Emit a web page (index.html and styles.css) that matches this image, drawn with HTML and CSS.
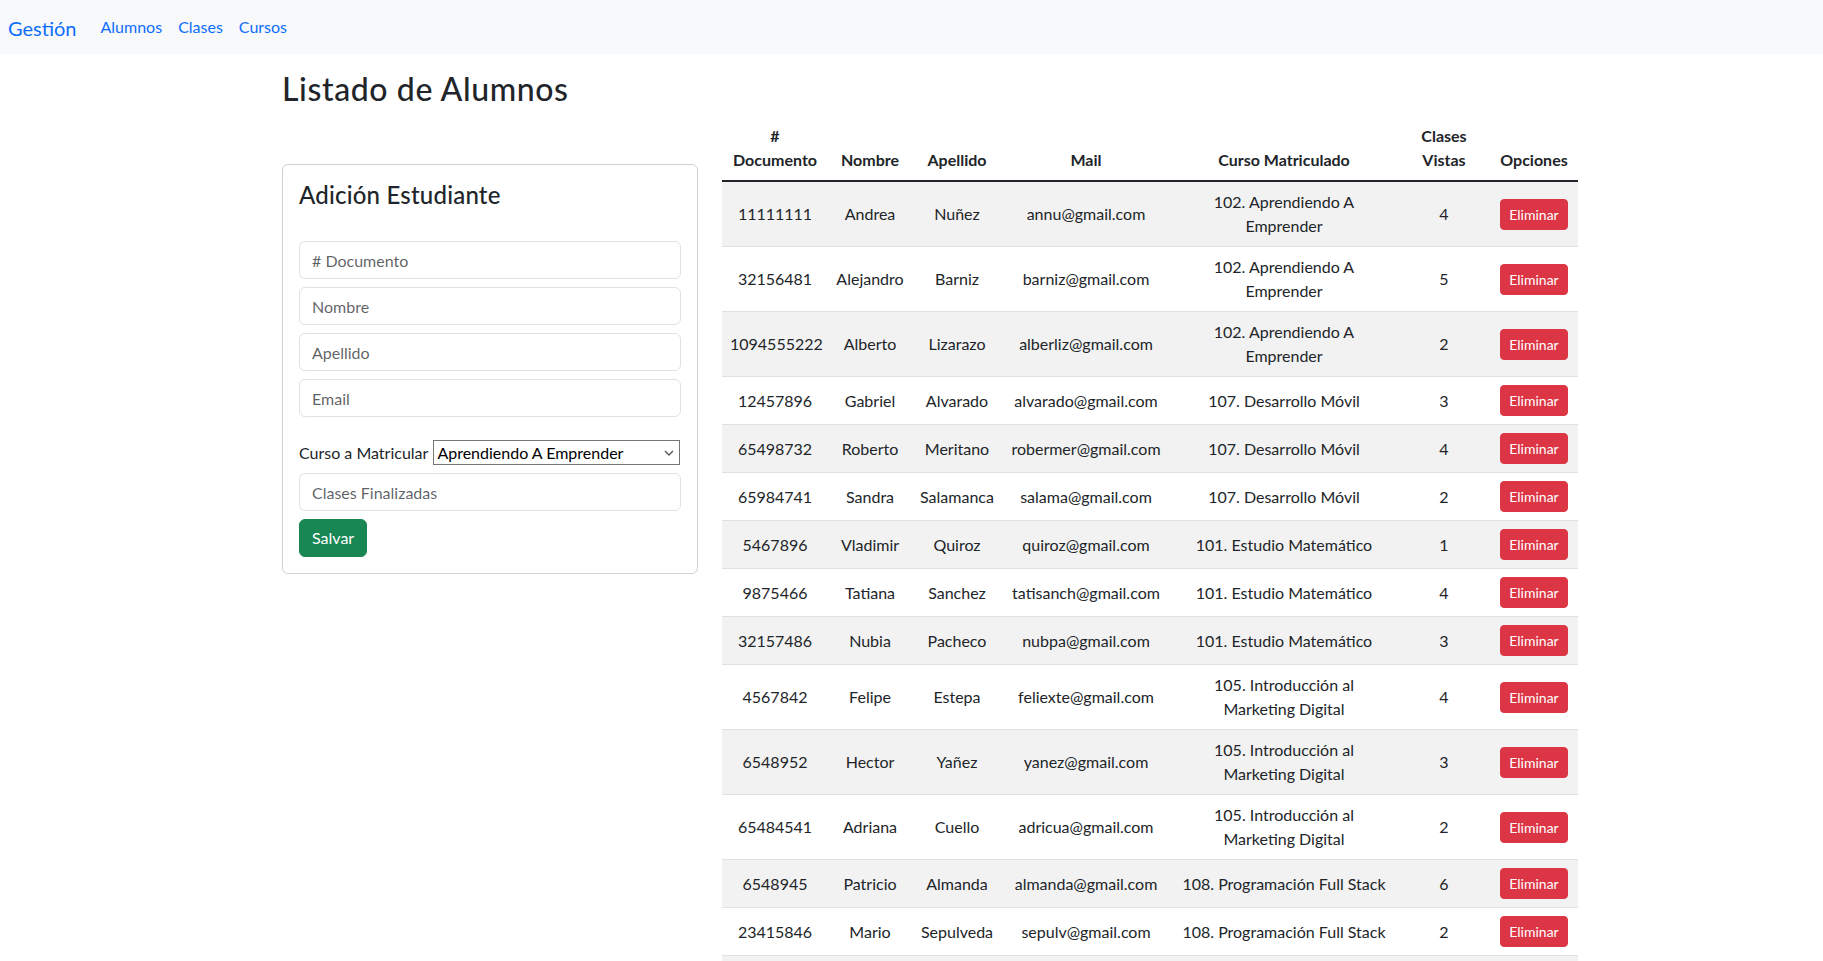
FILE: index.html
```html
<!DOCTYPE html>
<html lang="es">
<head>
<meta charset="utf-8">
<title>Gestión - Alumnos</title>
<link rel="stylesheet" href="styles.css">
</head>
<body>
<nav class="navbar">
  <a class="brand" href="#">Gestión</a>
  <ul class="nav-links">
    <li><a class="nav-link" href="#">Alumnos</a></li>
    <li><a class="nav-link" href="#">Clases</a></li>
    <li><a class="nav-link" href="#">Cursos</a></li>
  </ul>
</nav>

<main class="page">
  <h2 class="page-title">Listado de Alumnos</h2>
  <div class="layout">
    <section class="card">
      <h4 class="card-title">Adición Estudiante</h4>
      <form class="form">
        <input class="input" type="text" placeholder="# Documento">
        <input class="input" type="text" placeholder="Nombre">
        <input class="input" type="text" placeholder="Apellido">
        <input class="input" type="email" placeholder="Email">
        <div class="course-row">
          <label class="course-label" for="curso">Curso a Matricular</label>
          <span class="select-wrap">
            <select class="select" id="curso">
              <option>Aprendiendo A Emprender</option>
              <option>Estudio Matemático</option>
              <option>Introducción al Marketing Digital</option>
              <option>Desarrollo Móvil</option>
              <option>Programación Full Stack</option>
            </select>
            <svg class="select-arrow" width="10" height="6" viewBox="0 0 10 6" aria-hidden="true"><path d="M1 1l4 4 4-4" fill="none" stroke="#555" stroke-width="1.3"/></svg>
          </span>
        </div>
        <input class="input" type="text" placeholder="Clases Finalizadas">
        <div><button class="btn-save" type="button">Salvar</button></div>
      </form>
    </section>

    <div class="table-wrap">
      <table class="students">
        <colgroup>
          <col class="c-doc"><col class="c-nom"><col class="c-ape"><col class="c-mail"><col class="c-curso"><col class="c-clases"><col class="c-opc">
        </colgroup>
        <thead>
          <tr>
            <th># Documento</th>
            <th>Nombre</th>
            <th>Apellido</th>
            <th>Mail</th>
            <th>Curso Matriculado</th>
            <th>Clases Vistas</th>
            <th>Opciones</th>
          </tr>
        </thead>
        <tbody>
          <tr><td>11111111</td><td>Andrea</td><td>Nuñez</td><td>annu@gmail.com</td><td>102. Aprendiendo A Emprender</td><td>4</td><td><button class="btn-delete" type="button">Eliminar</button></td></tr>
          <tr><td>32156481</td><td>Alejandro</td><td>Barniz</td><td>barniz@gmail.com</td><td>102. Aprendiendo A Emprender</td><td>5</td><td><button class="btn-delete" type="button">Eliminar</button></td></tr>
          <tr><td>1094555222</td><td>Alberto</td><td>Lizarazo</td><td>alberliz@gmail.com</td><td>102. Aprendiendo A Emprender</td><td>2</td><td><button class="btn-delete" type="button">Eliminar</button></td></tr>
          <tr><td>12457896</td><td>Gabriel</td><td>Alvarado</td><td>alvarado@gmail.com</td><td>107. Desarrollo Móvil</td><td>3</td><td><button class="btn-delete" type="button">Eliminar</button></td></tr>
          <tr><td>65498732</td><td>Roberto</td><td>Meritano</td><td>robermer@gmail.com</td><td>107. Desarrollo Móvil</td><td>4</td><td><button class="btn-delete" type="button">Eliminar</button></td></tr>
          <tr><td>65984741</td><td>Sandra</td><td>Salamanca</td><td>salama@gmail.com</td><td>107. Desarrollo Móvil</td><td>2</td><td><button class="btn-delete" type="button">Eliminar</button></td></tr>
          <tr><td>5467896</td><td>Vladimir</td><td>Quiroz</td><td>quiroz@gmail.com</td><td>101. Estudio Matemático</td><td>1</td><td><button class="btn-delete" type="button">Eliminar</button></td></tr>
          <tr><td>9875466</td><td>Tatiana</td><td>Sanchez</td><td>tatisanch@gmail.com</td><td>101. Estudio Matemático</td><td>4</td><td><button class="btn-delete" type="button">Eliminar</button></td></tr>
          <tr><td>32157486</td><td>Nubia</td><td>Pacheco</td><td>nubpa@gmail.com</td><td>101. Estudio Matemático</td><td>3</td><td><button class="btn-delete" type="button">Eliminar</button></td></tr>
          <tr><td>4567842</td><td>Felipe</td><td>Estepa</td><td>feliexte@gmail.com</td><td>105. Introducción al Marketing Digital</td><td>4</td><td><button class="btn-delete" type="button">Eliminar</button></td></tr>
          <tr><td>6548952</td><td>Hector</td><td>Yañez</td><td>yanez@gmail.com</td><td>105. Introducción al Marketing Digital</td><td>3</td><td><button class="btn-delete" type="button">Eliminar</button></td></tr>
          <tr><td>65484541</td><td>Adriana</td><td>Cuello</td><td>adricua@gmail.com</td><td>105. Introducción al Marketing Digital</td><td>2</td><td><button class="btn-delete" type="button">Eliminar</button></td></tr>
          <tr><td>6548945</td><td>Patricio</td><td>Almanda</td><td>almanda@gmail.com</td><td>108. Programación Full Stack</td><td>6</td><td><button class="btn-delete" type="button">Eliminar</button></td></tr>
          <tr><td>23415846</td><td>Mario</td><td>Sepulveda</td><td>sepulv@gmail.com</td><td>108. Programación Full Stack</td><td>2</td><td><button class="btn-delete" type="button">Eliminar</button></td></tr>
          <tr><td>78451236</td><td>Laura</td><td>Castro</td><td>lacastro@gmail.com</td><td>108. Programación Full Stack</td><td>5</td><td><button class="btn-delete" type="button">Eliminar</button></td></tr>
        </tbody>
      </table>
    </div>
  </div>
</main>
</body>
</html>
```

FILE: styles.css
```css
* {
  box-sizing: border-box;
}

body {
  margin: 0;
  font-family: Lato, "Liberation Sans", sans-serif;
  font-size: 16px;
  line-height: 1.5;
  color: #212529;
  background: #fff;
}

/* ---------- navbar ---------- */
.navbar {
  display: flex;
  align-items: center;
  height: 54px;
  padding: 0 8px;
  background: #f8f9fa;
}

.brand {
  font-size: 20px;
  line-height: 30px;
  padding: 6px 0 4px;
  margin-right: 16px;
  color: #0d6efd;
  text-decoration: none;
}

.nav-links {
  display: flex;
  list-style: none;
  margin: 0;
  padding: 0;
}

.nav-link {
  display: block;
  padding: 8px;
  color: #0d6efd;
  text-decoration: none;
}

/* ---------- page ---------- */
.page {
  width: 1296px;
  margin: 16px 0 0 282px;
}

.page-title {
  margin: 0 0 8px;
  font-size: 32px;
  font-weight: 500;
  line-height: 1.2;
  letter-spacing: 0.6px;
}

.layout {
  display: grid;
  grid-template-columns: 416px 856px;
  column-gap: 24px;
  align-items: start;
}

/* ---------- card / form ---------- */
.card {
  margin-top: 48px;
  padding: 16px;
  border: 1px solid rgba(0, 0, 0, 0.175);
  border-radius: 6px;
}

.card-title {
  margin: 0 0 8px;
  font-size: 24px;
  font-weight: 500;
  line-height: 1.2;
  letter-spacing: 0.2px;
}

.form {
  margin-top: 31px;
}

.input {
  display: block;
  width: 100%;
  height: 38px;
  margin: 0 0 8px;
  padding: 6px 12px;
  font: inherit;
  color: #212529;
  background: #fff;
  border: 1px solid #dee2e6;
  border-radius: 6px;
}

.input::placeholder {
  color: rgba(33, 37, 41, 0.72);
}

.course-row {
  display: flex;
  align-items: center;
  gap: 5px;
  margin: 23px 0 8px;
}

.course-label {
  white-space: nowrap;
}

.select-wrap {
  position: relative;
  flex: 1;
  min-width: 0;
  margin-right: 1px;
  display: flex;
}

.select {
  width: 100%;
  min-width: 0;
  height: 25px;
  padding: 0 20px 0 3px;
  font-family: inherit;
  font-size: 16px;
  color: #000;
  background: #fff;
  border: 1px solid #767676;
  border-radius: 0;
  appearance: none;
  -webkit-appearance: none;
}

.select-arrow {
  position: absolute;
  right: 6px;
  top: 10px;
  pointer-events: none;
}

.btn-save {
  padding: 6px 12px;
  font: inherit;
  line-height: 24px;
  color: #fff;
  background: #198754;
  border: 1px solid #198754;
  border-radius: 6px;
}

/* ---------- table ---------- */
.students {
  width: 100%;
  border-collapse: collapse;
  table-layout: fixed;
  text-align: center;
}

.c-doc { width: 106px; }
.c-nom { width: 84px; }
.c-ape { width: 90px; }
.c-mail { width: 168px; }
.c-curso { width: 228px; }
.c-clases { width: 92px; }
.c-opc { width: 88px; }

.students th,
.students td {
  padding: 8px;
}

.students thead th {
  vertical-align: bottom;
  font-weight: 700;
  border-bottom: 2px solid #212529;
}

.students tbody td {
  vertical-align: middle;
  border-bottom: 1px solid #dee2e6;
}

.students tbody tr:nth-child(odd) td {
  background: #f2f2f2;
}

.btn-delete {
  vertical-align: middle;
  padding: 4px 8px;
  font-family: inherit;
  font-size: 14px;
  line-height: 21px;
  color: #fff;
  background: #dc3545;
  border: 1px solid #dc3545;
  border-radius: 4px;
}
```
